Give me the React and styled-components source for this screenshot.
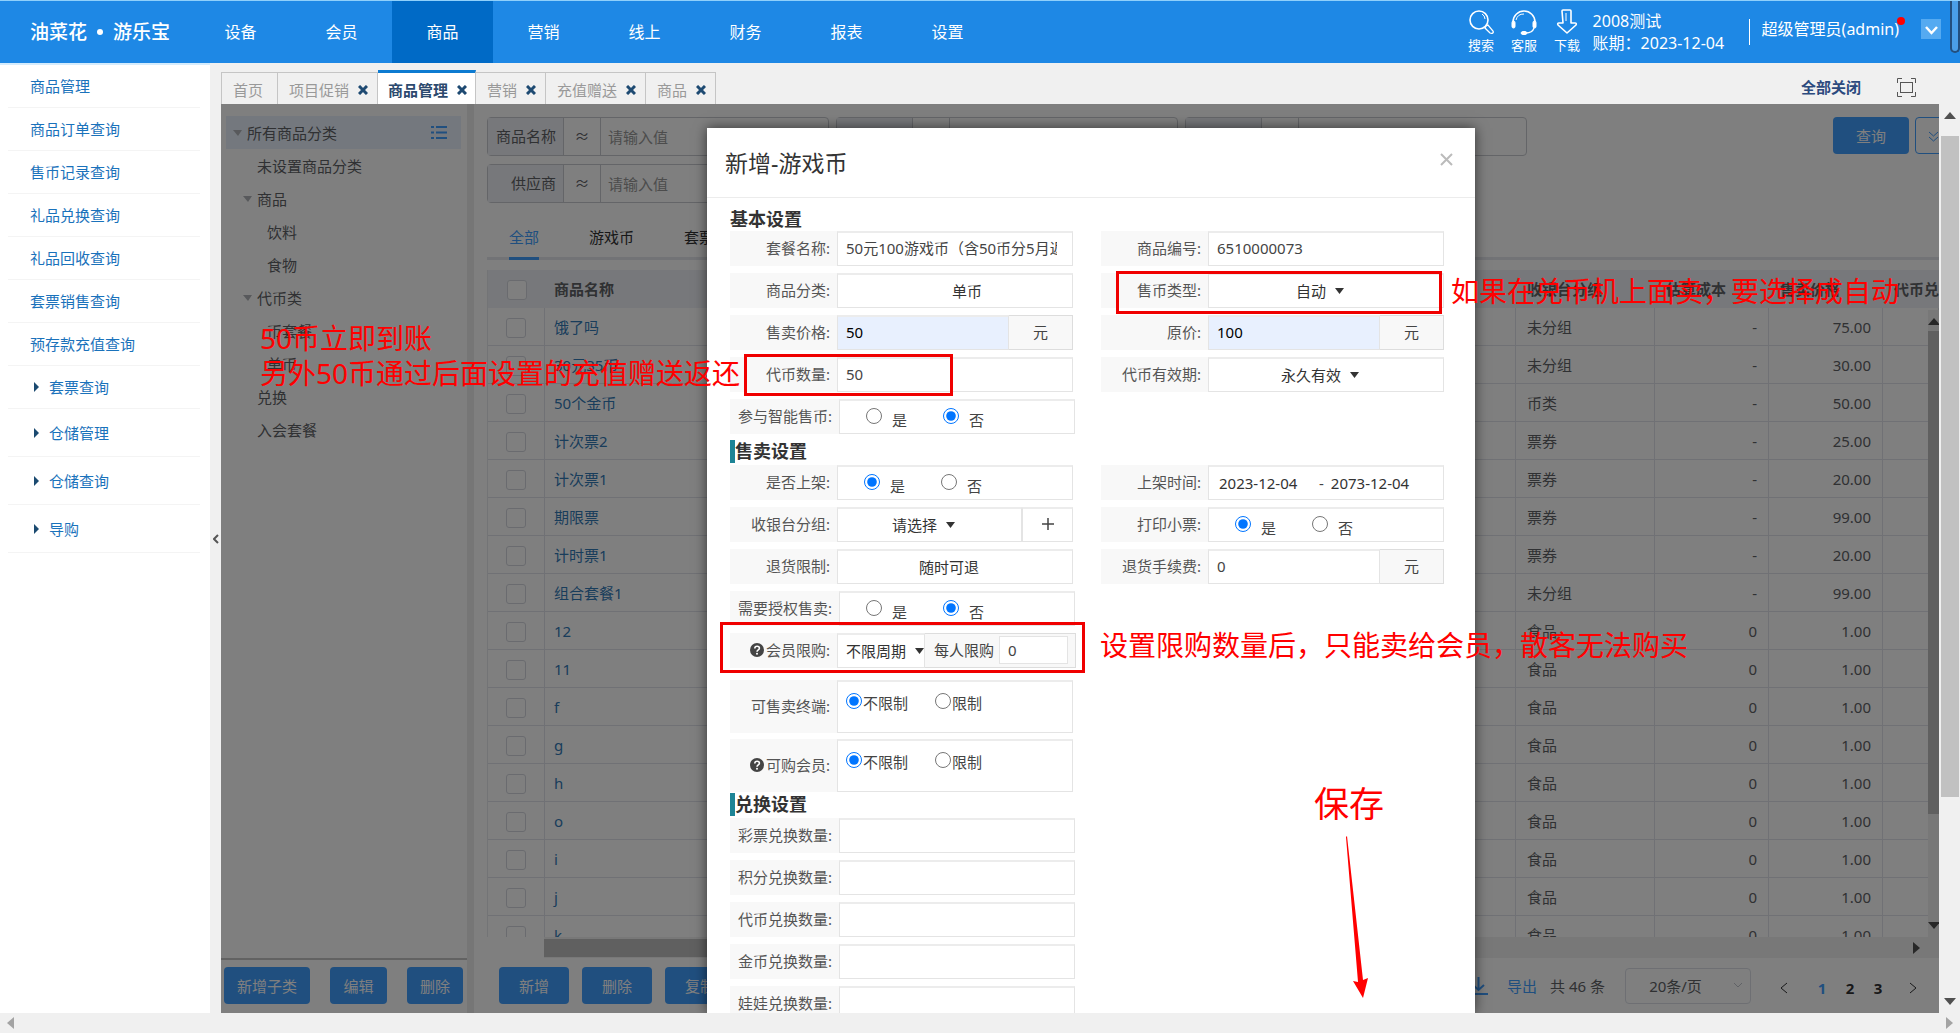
import React from 'react';
import styled, { createGlobalStyle, css } from 'styled-components';

const NAV_LIST = ['设备', '会员', '商品', '营销', '线上', '财务', '报表', '设置'];

const MENU_LIST = [
  '商品管理',
  '商品订单查询',
  '售币记录查询',
  '礼品兑换查询',
  '礼品回收查询',
  '套票销售查询',
  '预存款充值查询',
];

const MENU_GROUP_LIST = ['套票查询', '仓储管理', '仓储查询', '导购'];

const TAB_LIST = [
  { title: '首页' },
  { title: '项目促销', closable: true },
  { title: '商品管理', closable: true, active: true },
  { title: '营销', closable: true },
  { title: '充值赠送', closable: true },
  { title: '商品', closable: true },
];

const TREE_LIST = [
  { title: '未设置商品分类', depth: 1 },
  { title: '商品', depth: 1, open: true },
  { title: '饮料', depth: 2 },
  { title: '食物', depth: 2 },
  { title: '代币类', depth: 1, open: true },
  { title: '币套餐', depth: 2 },
  { title: '单币', depth: 2 },
  { title: '兑换', depth: 1 },
  { title: '入会套餐', depth: 1 },
];

const CATEGORY_LIST = ['全部', '游戏币', '套票'];

const GOODS_LIST = [
  ['饿了吗', '未分组', '-', '75.00'],
  ['30元35币', '未分组', '-', '30.00'],
  ['50个金币', '币类', '-', '50.00'],
  ['计次票2', '票券', '-', '25.00'],
  ['计次票1', '票券', '-', '20.00'],
  ['期限票', '票券', '-', '99.00'],
  ['计时票1', '票券', '-', '20.00'],
  ['组合套餐1', '未分组', '-', '99.00'],
  ['12', '食品', '0', '1.00'],
  ['11', '食品', '0', '1.00'],
  ['f', '食品', '0', '1.00'],
  ['g', '食品', '0', '1.00'],
  ['h', '食品', '0', '1.00'],
  ['o', '食品', '0', '1.00'],
  ['i', '食品', '0', '1.00'],
  ['j', '食品', '0', '1.00'],
  ['k', '食品', '0', '1.00'],
];

const EXCHANGE_LIST = [
  '彩票兑换数量',
  '积分兑换数量',
  '代币兑换数量',
  '金币兑换数量',
  '娃娃兑换数量',
];

export default function App() {
  return (
    <>
      <GlobalStyle />
      <Page>
        <Header />
        <Body>
          <Sidebar />
          <Main>
            <TabBar />
            <Workspace>
              <Content>
                <Tree />
                <Divider />
                <Goods />
                <Overlay />
                <GoodsModal />
              </Content>
              <PageScroll>
                <Caret $dir="up" />
                <PageThumb />
                <Caret $dir="down" />
              </PageScroll>
            </Workspace>
          </Main>
        </Body>
        <BottomScroll>
          <Caret $dir="left" $light />
          <Caret $dir="right" $light />
        </BottomScroll>
      </Page>
    </>
  );
}

function Header() {
  return (
    <HeaderWrap>
      <Logo>
        油菜花<LogoDot />游乐宝
      </Logo>
      <Nav>
        {NAV_LIST.map(name => (
          <NavLink key={name} href="#" $active={name === '商品'}>
            {name}
          </NavLink>
        ))}
      </Nav>
      <ToolButton type="button">
        <svg width="26" height="26" viewBox="0 0 26 26" fill="none" stroke="#fff">
          <circle cx="11" cy="11" r="9" strokeWidth="1.600" />
          <path d="M14 5a6 6 0 0 1 3 5" />
          <path d="M18 17l2-1 5 6c1 2-1 3-3 2l-5-5z" strokeWidth="1.300" />
        </svg>
        搜索
      </ToolButton>
      <ToolButton type="button">
        <svg width="26" height="26" viewBox="0 0 26 26" fill="none" stroke="#fff">
          <path d="M2 13a11 11 0 0 1 22 0" strokeWidth="1.500" />
          <path d="M5 11a8 8 0 0 1 8-6" />
          <rect x="1" y="12" width="3" height="7" rx="1.5" fill="#fff" />
          <rect x="22" y="12" width="3" height="7" rx="1.5" fill="#fff" />
          <path d="M23 19c-1 3-4 5-8 5" strokeWidth="1.300" />
          <ellipse cx="13" cy="24" rx="3" ry="1.6" fill="#fff" />
        </svg>
        客服
      </ToolButton>
      <ToolButton type="button">
        <svg width="26" height="26" viewBox="0 0 26 26" fill="none" stroke="#fff">
          <path
            d="M8 2q0-1 1-1h7q1 0 1 1v12h4q2 0 1 2l-9 8-9-8q-1-2 1-2h4z"
            strokeWidth="1.600"
            strokeLinejoin="round"
          />
          <path d="M12 4v8" />
        </svg>
        下载
      </ToolButton>
      <Account>
        <span>2008测试</span>
        <span>账期：2023-12-04</span>
      </Account>
      <User>
        超级管理员(admin)
        <RedDot />
      </User>
      <UserToggle type="button" aria-label="展开">
        <svg width="13" height="9" viewBox="0 0 13 9" fill="none">
          <path d="M1 1l5.500 6L12 1" stroke="#fff" strokeWidth="2.500" />
        </svg>
      </UserToggle>
      <HeaderThumb />
    </HeaderWrap>
  );
}

function Sidebar() {
  return (
    <>
      <SidebarWrap>
        {MENU_LIST.map(name => (
          <MenuLink key={name} href="#">
            {name}
          </MenuLink>
        ))}
        {MENU_GROUP_LIST.map((name, index) => (
          <MenuGroup key={name} href="#" $first={index === 0}>
            <svg width="6" height="10" viewBox="0 0 6 10">
              <path d="M0 0l5 5-5 5z" fill="#1b4a70" />
            </svg>
            {name}
          </MenuGroup>
        ))}
      </SidebarWrap>
      <Handle type="button" aria-label="收起">
        <svg width="6" height="10" viewBox="0 0 6 10" fill="none">
          <path d="M5 1L1 5l4 4" stroke="#555" strokeWidth="2" />
        </svg>
      </Handle>
    </>
  );
}

function TabBar() {
  return (
    <TabBarWrap>
      {TAB_LIST.map(tab => (
        <Tab key={tab.title} $active={tab.active}>
          {tab.title}
          {tab.closable && (
            <TabClose type="button" aria-label={`关闭${tab.title}`}>
              <svg width="10" height="10" viewBox="0 0 10 10">
                <path d="M1 1l8 8M9 1L1 9" stroke="#1e4a72" strokeWidth="3" />
              </svg>
            </TabClose>
          )}
        </Tab>
      ))}
      <CloseAll type="button">全部关闭</CloseAll>
      <FullScreen type="button" aria-label="全屏">
        <svg width="19" height="19" viewBox="0 0 19 19" fill="none" stroke="#555">
          <rect x="3.5" y="4.500" width="12" height="10" />
          <path d="M.5 5V.5H5M14 .5h4.500V5M18.500 14v4.500H14M5 18.500H.5V14" />
        </svg>
      </FullScreen>
    </TabBarWrap>
  );
}

function Tree() {
  return (
    <TreeWrap>
      <TreeList>
        <TreeRoot>
          <TreeCaret />
          所有商品分类
          <svg width="16" height="15" viewBox="0 0 16 15">
            <path
              d="M0 2h3M5 2h11M0 7.500h3M5 7.500h11M0 13h3M5 13h11"
              stroke="#409eff"
              strokeWidth="2"
            />
          </svg>
        </TreeRoot>
        {TREE_LIST.map(node => (
          <TreeNode key={node.title} $depth={node.depth}>
            {node.open ? <TreeCaret /> : <TreeBlank />}
            {node.title}
          </TreeNode>
        ))}
      </TreeList>
      <TreeFooter>
        <BlueButton type="button">新增子类</BlueButton>
        <BlueButton type="button">编辑</BlueButton>
        <BlueButton type="button">删除</BlueButton>
      </TreeFooter>
    </TreeWrap>
  );
}

function Filter({ label }) {
  return (
    <FilterWrap>
      <FilterLabel htmlFor={label}>{label}</FilterLabel>
      <FilterMode>≈</FilterMode>
      <FilterInput id={label} placeholder="请输入值" />
    </FilterWrap>
  );
}

function Goods() {
  return (
    <GoodsWrap>
      <FilterBar>
        <FilterList>
          <Filter label="商品名称" />
          <Filter label="条码" />
          <Filter label="编号" />
          <Filter label="供应商" />
        </FilterList>
        <BlueButton type="button" $wide>
          查询
        </BlueButton>
        <MoreButton type="button" aria-label="更多条件">
          <svg width="11" height="11" viewBox="0 0 11 11" fill="none">
            <path d="M1 1l4.500 4L10 1M1 6l4.500 4L10 6" stroke="#409eff" />
          </svg>
        </MoreButton>
      </FilterBar>
      <CategoryBar>
        {CATEGORY_LIST.map((name, index) => (
          <Category key={name} type="button" $active={index === 0}>
            {name}
          </Category>
        ))}
      </CategoryBar>
      <TableArea>
        <TableClip>
          <GoodsTable>
            <colgroup>
              <col width="57" />
              <col />
              <col width="139" />
              <col width="114" />
              <col width="114" />
              <col width="56" />
            </colgroup>
            <thead>
              <tr>
                <CheckCell as="th">
                  <input type="checkbox" aria-label="全选" />
                </CheckCell>
                <th>商品名称</th>
                <th>收银台分组</th>
                <th>估算成本</th>
                <th>售卖价格</th>
                <th>代币兑换</th>
              </tr>
            </thead>
            <tbody>
              {GOODS_LIST.map(([name, group, cost, price]) => (
                <tr key={name}>
                  <CheckCell>
                    <input type="checkbox" aria-label={name} />
                  </CheckCell>
                  <td>
                    <a href="#">{name}</a>
                  </td>
                  <td>{group}</td>
                  <NumberCell>{cost}</NumberCell>
                  <NumberCell>{price}</NumberCell>
                  <td />
                </tr>
              ))}
            </tbody>
          </GoodsTable>
        </TableClip>
        <TableScrollY>
          <Caret $dir="up" />
          <TableThumbY />
          <Caret $dir="down" />
        </TableScrollY>
        <TableScrollX>
          <TableThumbX />
          <Caret $dir="right" />
        </TableScrollX>
      </TableArea>
      <GoodsFooter>
        <BlueButton type="button" $medium>
          新增
        </BlueButton>
        <BlueButton type="button" $medium>
          删除
        </BlueButton>
        <BlueButton type="button" $medium>
          复制
        </BlueButton>
        <ExportLink href="#">
          <svg width="19" height="18" viewBox="0 0 19 18" fill="none">
            <path d="M9.500 0v13M4 8l5.500 5L15 8M0 17h19" stroke="#409eff" strokeWidth="2" />
          </svg>
          导出
        </ExportLink>
        <Total>共 46 条</Total>
        <SizeBox>
          <select aria-label="每页条数">
            <option>20条/页</option>
          </select>
          <svg width="10" height="7" viewBox="0 0 10 7" fill="none">
            <path d="M1 1l4 4 4-4" stroke="#c0c4cc" />
          </svg>
        </SizeBox>
        <Pager>
          <PageButton type="button" aria-label="上一页">
            <svg width="8" height="12" viewBox="0 0 8 12" fill="none">
              <path d="M7 1L1 6l6 5" stroke="#303133" />
            </svg>
          </PageButton>
          <PageButton type="button" $active>
            1
          </PageButton>
          <PageButton type="button">2</PageButton>
          <PageButton type="button">3</PageButton>
          <PageButton type="button" aria-label="下一页">
            <svg width="8" height="12" viewBox="0 0 8 12" fill="none">
              <path d="M1 1l6 5-6 5" stroke="#303133" />
            </svg>
          </PageButton>
        </Pager>
      </GoodsFooter>
    </GoodsWrap>
  );
}

function Field({ label, id, help, tall, children }) {
  return (
    <FieldWrap $tall={tall}>
      <FieldLabel as={id ? 'label' : 'span'} htmlFor={id}>
        {help && <HelpIcon />}
        {label}:
      </FieldLabel>
      {children}
    </FieldWrap>
  );
}

function HelpIcon() {
  return (
    <svg width="14" height="14" viewBox="0 0 14 14">
      <circle cx="7" cy="7" r="7" fill="#444" />
      <path
        d="M4.800 5.400c0-3 4.600-2.800 4.600-.2C9.400 7 7 6.800 7 8.800"
        fill="none"
        stroke="#fff"
        strokeWidth="1.600"
      />
      <circle cx="7" cy="10.800" r="1" fill="#fff" />
    </svg>
  );
}

function SelectBox({ label, options, caret, picker }) {
  return (
    <SelectWrap $picker={picker}>
      <select aria-label={label}>
        <option>{options}</option>
      </select>
      {caret && (
        <svg width="9" height="6" viewBox="0 0 9 6">
          <path d="M0 0h9L4.500 6z" fill="#333" />
        </svg>
      )}
    </SelectWrap>
  );
}

function YesNo({ name, value }) {
  return (
    <RadioGroup>
      {['是', '否'].map(text => (
        <RadioLabel key={text}>
          <input type="radio" name={name} defaultChecked={value === text} />
          <span>{text}</span>
        </RadioLabel>
      ))}
    </RadioGroup>
  );
}

function Limit({ name }) {
  return (
    <RadioGroup $tight>
      {['不限制', '限制'].map((text, index) => (
        <RadioLabel key={text} $tight>
          <input type="radio" name={name} defaultChecked={index === 0} />
          <span>{text}</span>
        </RadioLabel>
      ))}
    </RadioGroup>
  );
}

function GoodsModal() {
  return (
    <Modal role="dialog" aria-label="新增-游戏币">
      <ModalClip>
        <ModalHeader>
          <ModalTitle>新增-游戏币</ModalTitle>
          <ModalClose type="button" aria-label="关闭">
            <svg width="13" height="13" viewBox="0 0 13 13">
              <path d="M1 1l11 11M12 1L1 12" stroke="#bbb" strokeWidth="2" />
            </svg>
          </ModalClose>
        </ModalHeader>
        <ModalBody>
          <SectionTitle>基本设置</SectionTitle>
          <Columns>
            <Column>
              <Field label="套餐名称" id="name">
                <TextInput id="name" defaultValue="50元100游戏币（含50币分5月返还）" />
              </Field>
              <Field label="商品分类">
                <SelectBox label="商品分类" options="单币" picker />
              </Field>
              <Field label="售卖价格" id="price">
                <TextInput id="price" defaultValue="50" $filled />
                <Unit>元</Unit>
              </Field>
              <Field label="代币数量" id="count">
                <TextInput id="count" defaultValue="50" />
              </Field>
              <Field label="参与智能售币">
                <YesNo name="smart" value="否" />
              </Field>
            </Column>
            <Column>
              <Field label="商品编号" id="code">
                <TextInput id="code" defaultValue="6510000073" />
              </Field>
              <Field label="售币类型">
                <SelectBox label="售币类型" options="自动" caret />
              </Field>
              <Field label="原价" id="origin">
                <TextInput id="origin" defaultValue="100" $filled />
                <Unit>元</Unit>
              </Field>
              <Field label="代币有效期">
                <SelectBox label="代币有效期" options="永久有效" caret />
              </Field>
            </Column>
          </Columns>
          <SectionTitle $bar>售卖设置</SectionTitle>
          <Columns>
            <Column>
              <Field label="是否上架">
                <YesNo name="shelf" value="是" />
              </Field>
              <Field label="收银台分组">
                <SelectBox label="收银台分组" options="请选择" caret />
                <AddButton type="button" aria-label="新增分组">
                  <svg width="14" height="14" viewBox="0 0 14 14">
                    <path d="M7 1v12M1 7h12" stroke="#444" strokeWidth="1.500" />
                  </svg>
                </AddButton>
              </Field>
              <Field label="退货限制">
                <SelectBox label="退货限制" options="随时可退" />
              </Field>
              <Field label="需要授权售卖">
                <YesNo name="auth" value="否" />
              </Field>
              <Field label="会员限购" help>
                <SelectBox label="会员限购" options="不限周期" caret />
                <PerMember>
                  每人限购
                  <input defaultValue="0" />
                </PerMember>
              </Field>
              <TallFields>
                <Field label="可售卖终端" tall>
                  <Limit name="terminal" />
                </Field>
                <Field label="可购会员" help tall>
                  <Limit name="member" />
                </Field>
              </TallFields>
            </Column>
            <Column>
              <Field label="上架时间">
                <DateRange>
                  <input aria-label="开始" defaultValue="2023-12-04" />
                  -
                  <input aria-label="结束" defaultValue="2073-12-04" />
                </DateRange>
              </Field>
              <Field label="打印小票">
                <YesNo name="ticket" value="是" />
              </Field>
              <Field label="退货手续费" id="fee">
                <TextInput id="fee" defaultValue="0" />
                <Unit>元</Unit>
              </Field>
            </Column>
          </Columns>
          <SectionTitle $bar $close>
            兑换设置
          </SectionTitle>
          <Columns>
            <Column>
              {EXCHANGE_LIST.map(name => (
                <Field key={name} label={name} id={name}>
                  <TextInput id={name} />
                </Field>
              ))}
            </Column>
          </Columns>
        </ModalBody>
      </ModalClip>
      <MarkBox $left={409} $top={143} $width={326} $height={43} />
      <MarkBox $left={37} $top={226} $width={209} $height={42} />
      <MarkBox $left={13} $top={494} $width={365} $height={51} />
      <MarkText $left={-447} $top={193}>
        50币立即到账
        <br />
        另外50币通过后面设置的充值赠送返还
      </MarkText>
      <MarkText $left={744} $top={146}>
        如果在兑币机上面卖，要选择成自动
      </MarkText>
      <MarkText $left={393} $top={500}>
        设置限购数量后，只能卖给会员，散客无法购买
      </MarkText>
      <MarkText $left={607} $top={658} $large>
        保存
      </MarkText>
      <MarkArrow width="24" height="162" viewBox="0 0 24 162">
        <path d="M3 0L19 144l5-2-5 20-10-17 5 1L2 1z" fill="#f00" />
      </MarkArrow>
    </Modal>
  );
}

const GlobalStyle = createGlobalStyle`
  * {
    box-sizing: border-box;
  }
  body {
    margin: 0;
    overflow: hidden;
  }
  body, button, input, select {
    font-family: 'Noto Sans', 'Noto Sans CJK SC', sans-serif;
    font-size: 15px;
    line-height: 20px;
    color: #444;
  }
  button {
    padding: 0;
    border: 0;
    background: none;
  }
  a {
    text-decoration: none;
  }
  svg {
    flex: none;
  }
`;

const Page = styled.div`
  display: flex;
  flex-direction: column;
  height: 100vh;
  background: #fff;
`;

const Body = styled.div`
  display: flex;
  flex: 1;
  min-height: 0;
`;

const Main = styled.main`
  display: flex;
  flex: 1;
  flex-direction: column;
  min-width: 0;
`;

const Workspace = styled.div`
  display: flex;
  flex: 1;
  min-height: 0;
`;

const Content = styled.div`
  position: relative;
  display: flex;
  flex: 1;
  min-width: 0;
  overflow: hidden;
`;

const Overlay = styled.div`
  position: absolute;
  inset: 0;
  background: rgba(0, 0, 0, 0.5);
`;

const CARET = {
  up: '0 6px 7px 6px',
  down: '7px 6px 0 6px',
  left: '6px 7px 6px 0',
  right: '6px 0 6px 7px',
};

const Caret = styled.span`
  flex: none;
  width: 0;
  height: 0;
  border: solid transparent;
  border-width: ${({ $dir }) => CARET[$dir]};
  ${({ $dir, $light }) => {
    const side = { up: 'bottom', down: 'top', left: 'right', right: 'left' };
    return `border-${side[$dir]}-color: ${$light ? '#a3a3a3' : '#505050'};`;
  }}
`;

const PageScroll = styled.div`
  display: flex;
  flex-direction: column;
  align-items: center;
  width: 21px;
  padding: 8px 0;
  background: #f0f0f0;

  span:last-child {
    margin-top: auto;
  }
`;

const PageThumb = styled.div`
  flex: 0 0 74%;
  width: 18px;
  margin-top: 17px;
  background: #c1c1c1;
`;

const BottomScroll = styled.div`
  display: flex;
  align-items: center;
  justify-content: space-between;
  height: 20px;
  padding: 0 7px;
  background: #f0f0f0;
`;

const HeaderWrap = styled.header`
  display: flex;
  align-items: center;
  height: 63px;
  border-top: 1px solid #8fd0fb;
  background: #1e88e5;
  color: #fff;
`;

const Logo = styled.div`
  display: flex;
  align-items: center;
  width: 190px;
  padding-left: 30px;
  font-size: 19px;
  font-weight: 500;
`;

const LogoDot = styled.i`
  width: 6px;
  height: 6px;
  margin: 0 10px;
  border-radius: 50%;
  background: #fff;
`;

const Nav = styled.nav`
  display: flex;
  flex: 1;
  align-self: stretch;
`;

const NavLink = styled.a`
  width: 101px;
  line-height: 62px;
  font-size: 16px;
  text-align: center;
  color: #fff;
  background: ${({ $active }) => ($active ? '#006ac6' : 'none')};
`;

const ToolButton = styled.button`
  display: flex;
  flex-direction: column;
  align-items: center;
  width: 43px;
  font-size: 13px;
  color: #fff;
`;

const Account = styled.div`
  display: flex;
  flex-direction: column;
  gap: 2px;
  width: 160px;
  padding-left: 4px;
  font-size: 16px;
`;

const User = styled.div`
  position: relative;
  padding: 0 4px 6px 12px;
  border-left: 1px solid #fff;
  font-size: 16px;
  line-height: 20px;
`;

const RedDot = styled.i`
  position: absolute;
  top: -2px;
  right: -2px;
  width: 8px;
  height: 8px;
  border-radius: 50%;
  background: #f00;
`;

const UserToggle = styled.button`
  width: 20px;
  height: 20px;
  margin: 0 9px 6px 18px;
  background: #55aaf1;
`;

const HeaderThumb = styled.div`
  align-self: flex-start;
  width: 10px;
  height: 52px;
  border: 2px solid #234f7d;
  border-top: 0;
  border-radius: 0 0 5px 5px;
  background: #4a9fe8;
`;

const SidebarWrap = styled.aside`
  display: flex;
  flex-direction: column;
  width: 210px;
  padding: 0 10px 0 8px;
  border-top: 2px solid #d5ecfd;
`;

const MenuLink = styled.a`
  height: 43px;
  padding-left: 22px;
  border-bottom: 1px solid #f4f4f4;
  line-height: 43px;
  color: #1a72bb;
`;

const MenuGroup = styled.a`
  display: flex;
  align-items: center;
  gap: 9px;
  height: ${({ $first }) => ($first ? 43 : 48)}px;
  padding-left: 26px;
  border-bottom: 1px solid #f4f4f4;
  color: #1a72bb;
`;

const Handle = styled.button`
  width: 11px;
  background: #f0f0f0;
`;

const TabBarWrap = styled.div`
  display: flex;
  align-items: flex-end;
  height: 41px;
  padding-right: 44px;
  background: #f0f0f0;
`;

const Tab = styled.div`
  display: flex;
  align-items: center;
  gap: 9px;
  height: 32px;
  padding: 3px 9px 0 11px;
  border: 1px solid #c5c5c5;
  border-width: 1px 1px 0 0;
  color: #999;

  &:first-child {
    padding-right: 14px;
    border-left-width: 1px;
  }

  ${({ $active }) =>
    $active &&
    css`
      height: 34px;
      padding: 2px 8px 0 10px;
      border-top: 3px solid #0d7bd1;
      background: #fff;
      font-weight: bold;
      color: #2c4a6e;
    `}
`;

const TabClose = styled.button`
  display: flex;
`;

const CloseAll = styled.button`
  height: 34px;
  margin-left: auto;
  font-weight: bold;
  color: #2c4a7e;
`;

const FullScreen = styled.button`
  display: flex;
  align-items: center;
  height: 34px;
  margin-left: 36px;
`;

const BlueButton = styled.button`
  height: 37px;
  padding: 0 13px;
  border-radius: 4px;
  background: #409eff;
  color: #fff;
  ${({ $medium }) => $medium && 'padding: 0 20px;'}
  ${({ $wide }) => $wide && 'width: 76px;'}
`;

const TreeWrap = styled.div`
  display: flex;
  flex-direction: column;
  width: 246px;
  background: #fff;
`;

const TreeList = styled.div`
  flex: 1;
  padding: 12px 6px 0 5px;
`;

const TreeRoot = styled.div`
  display: flex;
  align-items: center;
  gap: 5px;
  height: 33px;
  padding: 0 14px 0 7px;
  background: #e8f1fc;
  color: #606266;

  svg {
    margin-left: auto;
  }
`;

const TreeNode = styled.div`
  display: flex;
  align-items: center;
  gap: 5px;
  height: 33px;
  padding-left: ${({ $depth }) => 7 + $depth * 10}px;
  color: #606266;
`;

const TreeCaret = styled.span`
  width: 9px;
  height: 6px;
  border: solid transparent;
  border-width: 6px 4px 0 5px;
  border-top-color: #b0b3b8;
`;

const TreeBlank = styled.span`
  width: 9px;
`;

const TreeFooter = styled.div`
  display: flex;
  align-items: center;
  justify-content: space-between;
  height: 55px;
  padding: 0 4px 2px 3px;
  border-top: 2px solid #c4c4c4;
`;

const Divider = styled.div`
  width: 7px;
  background: #ededed;
`;

const GoodsWrap = styled.section`
  display: flex;
  flex: 1;
  flex-direction: column;
  min-width: 0;
  padding: 13px 0 0 13px;
  background: #fff;
`;

const FilterBar = styled.div`
  display: flex;
  align-items: flex-start;
  gap: 6px;
`;

const FilterList = styled.div`
  display: grid;
  flex: 1;
  grid-template-columns: repeat(3, 342px);
  gap: 8px 7px;
`;

const FilterWrap = styled.div`
  display: flex;
  height: 39px;
  border: 1px solid #c8cad0;
  border-radius: 4px;
  line-height: 37px;
  color: #606266;
`;

const FilterLabel = styled.label`
  width: 76px;
  padding-right: 7px;
  border-right: 1px solid #c8cad0;
  background: #eff1f6;
  text-align: right;
`;

const FilterMode = styled.span`
  width: 37px;
  border-right: 1px solid #c8cad0;
  text-align: center;
`;

const FilterInput = styled.input`
  flex: 1;
  min-width: 0;
  padding: 0 7px;
  border: 0;
  background: none;

  &::placeholder {
    color: #999;
  }
`;

const MoreButton = styled.button`
  width: 37px;
  height: 37px;
  margin-right: -13px;
  border: 1px solid #409eff;
  border-radius: 4px;
`;

const CategoryBar = styled.div`
  display: flex;
  gap: 50px;
  margin: 14px 0 10px;
  padding-left: 22px;
  box-shadow: inset 0 -3px #e4e7ed;
`;

const Category = styled.button`
  height: 43px;
  border-bottom: 3px solid transparent;
  color: #303133;
  ${({ $active }) => $active && 'border-color: #409eff; color: #409eff;'}
`;

const TableArea = styled.div`
  display: grid;
  flex: 1;
  grid-template-columns: minmax(0, 1fr) 11px;
  grid-template-rows: minmax(0, 1fr) 21px;
  min-height: 0;
`;

const TableClip = styled.div`
  grid-column: 1 / 3;
  grid-row: 1;
  overflow: hidden;
`;

const GoodsTable = styled.table`
  width: 100%;
  table-layout: fixed;
  border-collapse: separate;
  border-spacing: 0;
  border-left: 1px solid #e6e8ed;
  color: #606266;

  th {
    height: 38px;
    padding: 0 0 0 11px;
    background: #eff1f6;
    overflow: hidden;
    text-align: left;
    white-space: nowrap;
  }
  td {
    height: 38px;
    padding: 0 11px;
    border: 1px solid #e0e3ea;
    border-width: 0 1px 1px 0;
  }
  th:nth-child(2),
  td:nth-child(2) {
    padding-left: 9px;
  }
  a {
    color: #337ab7;
  }
`;

const CheckCell = styled.td`
  && {
    padding: 0;
    text-align: center;
  }
  input {
    appearance: none;
    width: 20px;
    height: 20px;
    margin: 2px 0 0;
    border: 1px solid #d4d7de;
    border-radius: 3px;
    background: #fff;
    vertical-align: middle;
  }
`;

const NumberCell = styled.td`
  text-align: right;
`;

const TableScrollY = styled.div`
  z-index: 0;
  grid-column: 2;
  grid-row: 1;
  display: flex;
  flex-direction: column;
  align-items: center;
  margin-top: 40px;
  padding: 8px 0;
  background: #f0f0f0;
  overflow: hidden;

  span:last-child {
    margin-top: auto;
  }
`;

const TableThumbY = styled.div`
  flex: 0 0 79%;
  width: 11px;
  margin-top: 6px;
  background: #c1c1c1;
`;

const TableScrollX = styled.div`
  grid-column: 1 / 3;
  display: flex;
  align-items: center;
  justify-content: space-between;
  margin-left: 57px;
  padding-right: 19px;
  background: #f0f0f0;
`;

const TableThumbX = styled.div`
  width: 60%;
  height: 18px;
  background: #c1c1c1;
`;

const GoodsFooter = styled.div`
  display: flex;
  align-items: center;
  gap: 13px;
  height: 55px;
  padding: 0 18px 0 12px;
`;

const ExportLink = styled.a`
  display: flex;
  align-items: center;
  gap: 19px;
  margin-left: auto;
  color: #409eff;
`;

const Total = styled.span`
  margin-right: 7px;
  color: #606266;
`;

const SizeBox = styled.div`
  display: flex;
  align-items: center;
  width: 126px;
  height: 36px;
  padding-right: 7px;
  border: 1px solid #dcdfe6;
  border-radius: 4px;

  select {
    flex: 1;
    appearance: none;
    padding-right: 8px;
    border: 0;
    background: none;
    text-align: center;
    text-align-last: center;
    color: #606266;
  }
`;

const Pager = styled.div`
  display: flex;
  padding-top: 4px;
`;

const PageButton = styled.button`
  width: 28px;
  font-weight: bold;
  color: ${({ $active }) => ($active ? '#409eff' : '#303133')};

  &:first-child {
    margin: 0 10px 0 6px;
  }
  &:last-child {
    width: 16px;
    margin-left: 13px;
  }
`;

const Modal = styled.div`
  position: absolute;
  top: 24px;
  bottom: 0;
  left: calc(50% + 11px);
  width: 768px;
  margin-left: -384px;
`;

const ModalClip = styled.div`
  height: 100%;
  overflow: hidden;
  background: #fff;
  box-shadow: 0 0 12px rgba(0, 0, 0, 0.6);
`;

const ModalHeader = styled.div`
  display: flex;
  justify-content: space-between;
  height: 70px;
  padding: 0 22px 0 18px;
  border-bottom: 1px solid #ececec;
`;

const ModalTitle = styled.h2`
  margin: 0;
  font-size: 23px;
  font-weight: normal;
  line-height: 70px;
  color: #333;
`;

const ModalClose = styled.button`
  height: 64px;
`;

const ModalBody = styled.div`
  padding: 10px 31px 0 23px;
`;

const SectionTitle = styled.h3`
  height: 23px;
  margin: 0;
  font-size: 18px;
  line-height: 23px;
  color: #333;
  ${({ $bar }) =>
    $bar &&
    css`
      margin: 6px 0 2px;
      border-left: 5px solid #1d8496;
    `}
  ${({ $close }) => $close && 'margin-top: 1px;'}
`;

const Columns = styled.div`
  display: grid;
  grid-template-columns: repeat(2, minmax(0, 1fr));
  gap: 28px;
`;

const Column = styled.div`
  display: flex;
  flex-direction: column;
  gap: 7px;
`;

const TallFields = styled.div`
  display: flex;
  flex-direction: column;
  gap: 6px;
  padding-top: 5px;
`;

const FieldWrap = styled.div`
  display: flex;
  align-self: flex-start;
  height: ${({ $tall }) => ($tall ? 53 : 35)}px;

  & > :nth-child(2) {
    width: 236px;
  }
  & > :nth-child(2):not(:last-child) {
    width: auto;
  }
`;

const FieldLabel = styled.span`
  display: flex;
  align-items: center;
  justify-content: flex-end;
  gap: 2px;
  min-width: 107px;
  padding: 0 7px 2px 8px;
  background: #f8f8f8;
  white-space: nowrap;
  color: #555;
`;

const boxed = css`
  border: 1px solid #e4e4e4;
  border-top: 2px solid #ececec;
  background: #fff;
`;

const TextInput = styled.input`
  ${boxed}
  padding: 0 15px 2px 8px;
  ${({ $filled }) => $filled && 'background: #e8f0fe; color: #000;'}

  &&:not(:last-child) {
    width: 172px;
  }
`;

const Unit = styled.span`
  width: 64px;
  border: 1px solid #ddd;
  border-width: 1px 1px 1px 0;
  background: #f8f8f8;
  line-height: 32px;
  text-align: center;
`;

const SelectWrap = styled.div`
  ${boxed}
  display: flex;
  align-items: center;
  justify-content: center;
  gap: 9px;
  flex: 1;
  padding-right: 12px;
  ${({ $picker }) => $picker && 'padding: 0 0 0 24px;'}

  select {
    appearance: none;
    field-sizing: content;
    padding: 0;
    border: 0;
    background: none;
    color: #333;
  }
`;

const AddButton = styled.button`
  ${boxed}
  width: 51px;

  ${SelectWrap}:has(+ &) {
    flex: 0 0 185px;
  }
`;

const PerMember = styled.label`
  display: flex;
  align-items: center;
  gap: 5px;
  width: 151px;
  padding: 0 7px 2px 9px;
  border: 1px solid #ddd;
  border-left: 0;
  background: #f8f8f8;

  input {
    width: 69px;
    height: 28px;
    padding: 0 8px;
    border: 1px solid #e4e4e4;
  }
  ${SelectWrap}:has(+ &) {
    flex: 0 0 88px;
    justify-content: flex-start;
    padding: 0 0 0 8px;
  }
`;

const RadioGroup = styled.div`
  ${boxed}
  display: flex;
  align-items: center;
  gap: 36px;
  padding: 3px 0 0 26px;
  ${({ $tight }) => $tight && 'gap: 27px; padding: 0 0 8px 8px;'}
`;

const RadioLabel = styled.label`
  display: flex;
  align-items: flex-start;
  gap: ${({ $tight }) => ($tight ? 1 : 10)}px;

  input {
    width: 16px;
    height: 16px;
    margin: 0;
  }
  span {
    padding-top: ${({ $tight }) => ($tight ? 0 : 2)}px;
    line-height: 20px;
  }
`;

const DateRange = styled.div`
  ${boxed}
  display: flex;
  align-items: center;
  padding-left: 10px;

  input {
    width: 100px;
    padding: 0;
    border: 0;
    color: #333;
  }
  input:last-child {
    padding-left: 7px;
  }
`;

const MarkBox = styled.div`
  position: absolute;
  left: ${({ $left }) => $left}px;
  top: ${({ $top }) => $top}px;
  width: ${({ $width }) => $width}px;
  height: ${({ $height }) => $height}px;
  border: 3px solid #f00000;
  pointer-events: none;
`;

const MarkText = styled.p`
  position: absolute;
  left: ${({ $left }) => $left}px;
  top: ${({ $top }) => $top}px;
  margin: 0;
  font-size: ${({ $large }) => ($large ? 35 : 28)}px;
  line-height: 35px;
  white-space: nowrap;
  color: #f00;
  pointer-events: none;
`;

const MarkArrow = styled.svg`
  position: absolute;
  left: 637px;
  top: 708px;
`;
